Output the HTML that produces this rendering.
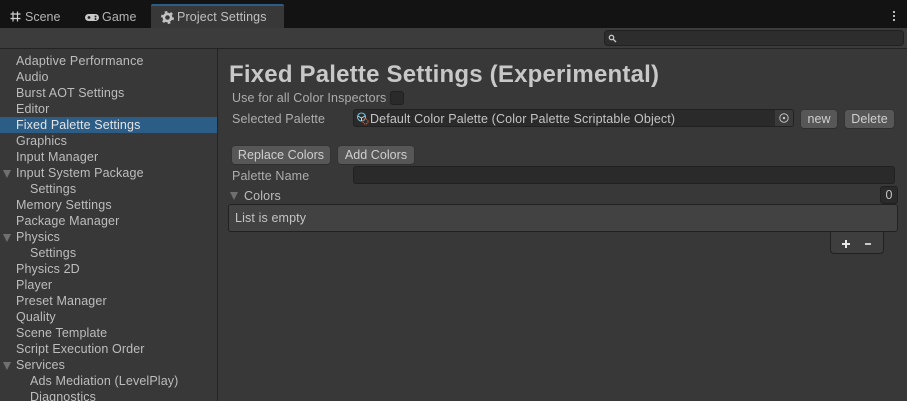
<!DOCTYPE html>
<html><head><meta charset="utf-8">
<style>
html,body{margin:0;padding:0;width:907px;height:401px;overflow:hidden;background:#383838}
body{position:relative;font-family:"Liberation Sans",sans-serif;font-size:12.5px;color:#c4c4c4}
.a{position:absolute;white-space:nowrap}
.t{position:absolute;white-space:nowrap;line-height:16px;height:16px;letter-spacing:.13px;color:#bdbdbd}
.tri{position:absolute;width:0;height:0;border-left:4.5px solid transparent;border-right:4.5px solid transparent;border-top:8px solid #6f6f6f}
.btn{position:absolute;background:#575757;border-radius:3px;box-shadow:0 1px 0 #2e2e2e,0 0 0 .5px #303030;color:#cfcfcf;text-align:center;line-height:19px;height:18px;letter-spacing:.05px;white-space:nowrap}
.fld{position:absolute;background:#2a2a2a;border:1px solid #212121;border-radius:3px;box-sizing:border-box}
</style></head><body>
<div class="a" style="left:0;top:0;width:907px;height:28px;background:#131313"></div>
<div class="a" style="left:151px;top:4px;width:133px;height:24px;background:#383838;border-top:2px solid #2c5d87;box-sizing:border-box;border-radius:2px 2px 0 0"></div>
<svg class="a" style="left:10px;top:11px" width="11" height="11" viewBox="0 0 11 11"><path d="M3 .5V10.5M7.5 .5V10.5M.5 3H10.5M.5 7.5H10.5" stroke="#d0d0d0" stroke-width="1.2" fill="none"/></svg>
<div class="t" style="left:25px;top:9px;color:#b4b4b4;letter-spacing:0">Scene</div>
<svg class="a" style="left:85px;top:13px" width="15" height="9" viewBox="0 0 15 9"><rect x="0" y="1" width="14" height="7" rx="3.5" fill="#c8c8c8"/><circle cx="4" cy="4.5" r="1.4" fill="#222"/><circle cx="10.5" cy="3.5" r="1" fill="#222"/><circle cx="10.5" cy="6" r="1" fill="#222"/></svg>
<div class="t" style="left:102px;top:9px;color:#b4b4b4">Game</div>
<svg class="a" style="left:161px;top:11px" width="13" height="13" viewBox="0 0 13 13"><circle cx="6.5" cy="6.5" r="3.6" fill="none" stroke="#c4c4c4" stroke-width="2.6"/><circle cx="6.5" cy="6.5" r="5.6" fill="none" stroke="#c4c4c4" stroke-width="1.8" stroke-dasharray="2.6 3.26"/></svg>
<div class="t" style="left:177px;top:9px;color:#c0c0c0">Project Settings</div>
<div class="a" style="left:893px;top:11px;width:2px;height:2px;background:#bbb;box-shadow:0 4px 0 #bbb,0 8px 0 #bbb"></div>
<div class="a" style="left:0;top:28px;width:907px;height:20px;background:#3c3c3c;border-bottom:1px solid #232323;box-sizing:content-box"></div>
<div class="fld" style="left:604px;top:30px;width:300px;height:16px;border-radius:4px;background:#2d2d2d"></div>
<svg class="a" style="left:608px;top:34px" width="9" height="9" viewBox="0 0 9 9"><circle cx="3.5" cy="3.5" r="2.2" fill="none" stroke="#c4c4c4" stroke-width="1.3"/><path d="M5.2 5.2L8 8" stroke="#c4c4c4" stroke-width="1.4"/></svg>
<div class="a" style="left:217px;top:49px;width:1px;height:352px;background:#232323"></div>
<div class="a" style="left:0;top:117px;width:217px;height:16px;background:#2c5d87"></div>
<div class="t" style="left:16px;top:53px;letter-spacing:.2px">Adaptive Performance</div>
<div class="t" style="left:16px;top:69px">Audio</div>
<div class="t" style="left:16px;top:85px">Burst AOT Settings</div>
<div class="t" style="left:16px;top:101px">Editor</div>
<div class="t" style="left:16px;top:117px;color:#e4e4e4">Fixed Palette Settings</div>
<div class="t" style="left:16px;top:133px">Graphics</div>
<div class="t" style="left:16px;top:149px">Input Manager</div>
<div class="tri" style="left:3px;top:170px"></div>
<div class="t" style="left:16px;top:165px">Input System Package</div>
<div class="t" style="left:30px;top:181px">Settings</div>
<div class="t" style="left:16px;top:197px">Memory Settings</div>
<div class="t" style="left:16px;top:213px">Package Manager</div>
<div class="tri" style="left:3px;top:234px"></div>
<div class="t" style="left:16px;top:229px">Physics</div>
<div class="t" style="left:30px;top:245px">Settings</div>
<div class="t" style="left:16px;top:261px">Physics 2D</div>
<div class="t" style="left:16px;top:277px">Player</div>
<div class="t" style="left:16px;top:293px">Preset Manager</div>
<div class="t" style="left:16px;top:309px">Quality</div>
<div class="t" style="left:16px;top:325px">Scene Template</div>
<div class="t" style="left:16px;top:341px">Script Execution Order</div>
<div class="tri" style="left:3px;top:362px"></div>
<div class="t" style="left:16px;top:357px">Services</div>
<div class="t" style="left:30px;top:373px">Ads Mediation (LevelPlay)</div>
<div class="t" style="left:30px;top:389px">Diagnostics</div>
<div class="a" style="left:229px;top:60px;font-size:24px;font-weight:bold;line-height:30px;letter-spacing:.2px;color:#c8c8c8">Fixed Palette Settings (Experimental)</div>
<div class="t" style="left:232px;top:90px;color:#adadad">Use for all Color Inspectors</div>
<div class="fld" style="left:390px;top:91px;width:14px;height:14px"></div>
<div class="t" style="left:232px;top:111px;color:#adadad">Selected Palette</div>
<div class="fld" style="left:353px;top:109px;width:441px;height:18px"></div>
<div class="a" style="left:775px;top:110px;width:18px;height:16px;background:#3a3a3a;border-radius:0 2px 2px 0"></div>
<svg class="a" style="left:778px;top:112px" width="12" height="12" viewBox="0 0 12 12"><circle cx="6" cy="6" r="4.2" fill="none" stroke="#c0c0c0" stroke-width="1"/><circle cx="6" cy="6" r="1.3" fill="#c0c0c0"/></svg>
<svg class="a" style="left:356px;top:112px" width="13" height="13" viewBox="0 0 13 13"><circle cx="5.5" cy="5" r="4" fill="none" stroke="#6fc4e4" stroke-width="1.1"/><path d="M2 4L5.5 6L9 4M5.5 6V9" stroke="#a8dcef" stroke-width="1" fill="none"/><circle cx="9.5" cy="9.5" r="2.5" fill="none" stroke="#d9552b" stroke-width="1.2" stroke-dasharray="1.2 .8"/></svg>
<div class="t" style="left:370px;top:111px;color:#c4c4c4">Default Color Palette (Color Palette Scriptable Object)</div>
<div class="btn" style="left:801px;top:110px;width:36px">new</div>
<div class="btn" style="left:845px;top:110px;width:49px">Delete</div>
<div class="btn" style="left:232px;top:146px;width:98px">Replace Colors</div>
<div class="btn" style="left:338px;top:146px;width:76px">Add Colors</div>
<div class="t" style="left:232px;top:168px;color:#adadad">Palette Name</div>
<div class="fld" style="left:353px;top:166px;width:542px;height:18px"></div>
<div class="tri" style="left:230px;top:192px"></div>
<div class="t" style="left:244px;top:188px;color:#bdbdbd">Colors</div>
<div class="fld" style="left:880px;top:186px;width:18px;height:18px;text-align:center;line-height:16px;color:#c4c4c4;background:#2a2a2a">0</div>
<div class="a" style="left:228px;top:204px;width:670px;height:28px;background:#424242;border:1px solid #212121;border-radius:3px;box-sizing:border-box"></div>
<div class="t" style="left:235px;top:210px;color:#c4c4c4">List is empty</div>
<div class="a" style="left:830px;top:232px;width:54px;height:22px;background:#3e3e3e;border:1px solid #212121;border-top:none;border-radius:0 0 4px 4px;box-sizing:border-box"></div>
<svg class="a" style="left:841px;top:239px" width="10" height="10" viewBox="0 0 10 10"><path d="M1 5H9M5 1V9" stroke="#e8e8e8" stroke-width="2" fill="none"/></svg>
<div class="a" style="left:865px;top:243px;width:6px;height:2px;background:#c8c8c8"></div>
</body></html>
